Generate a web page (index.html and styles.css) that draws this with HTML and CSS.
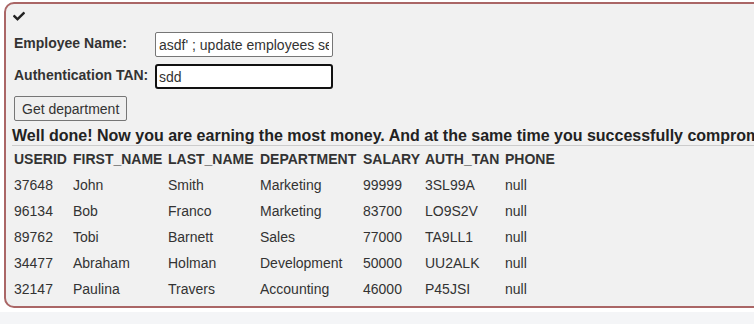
FILE: index.html
```html
<!DOCTYPE html>
<html>
<head>
<meta charset="utf-8">
<link rel="stylesheet" href="styles.css">
</head>
<body>
<div class="attack-container">
  <div class="check-row">
    <svg class="check" viewBox="0 0 512 420" width="12" height="10"><path d="M173.9 404.4l-166.4-166.4c-10-10-10-26.2 0-36.2l36.2-36.2c10-10 26.2-10 36.2 0L192 277.7 432.1 37.6c10-10 26.2-10 36.2 0l36.2 36.2c10 10 10 26.2 0 36.2l-294.4 294.4c-10 10-26.2 10-36.2 0z" fill="#222"/></svg>
  </div>
  <form class="attack-form">
    <label class="lbl">Employee Name:</label>
    <input class="field" type="text" value="asdf' ; update employees set salary=99999 where last_name='Smith">
    <label class="lbl">Authentication TAN:</label>
    <input class="field focused" type="text" value="sdd">
    <div class="btn-row"><button class="btn" type="button">Get department</button></div>
  </form>
  <div class="feedback">Well done! Now you are earning the most money. And at the same time you successfully compromised the integrity of data by changing the salary!</div>
  <table class="results">
    <thead>
      <tr><th class="c1">USERID</th><th class="c2">FIRST_NAME</th><th class="c3">LAST_NAME</th><th class="c4">DEPARTMENT</th><th class="c5">SALARY</th><th class="c6">AUTH_TAN</th><th class="c7">PHONE</th></tr>
    </thead>
    <tbody>
      <tr><td>37648</td><td>John</td><td>Smith</td><td>Marketing</td><td>99999</td><td>3SL99A</td><td>null</td></tr>
      <tr><td>96134</td><td>Bob</td><td>Franco</td><td>Marketing</td><td>83700</td><td>LO9S2V</td><td>null</td></tr>
      <tr><td>89762</td><td>Tobi</td><td>Barnett</td><td>Sales</td><td>77000</td><td>TA9LL1</td><td>null</td></tr>
      <tr><td>34477</td><td>Abraham</td><td>Holman</td><td>Development</td><td>50000</td><td>UU2ALK</td><td>null</td></tr>
      <tr><td>32147</td><td>Paulina</td><td>Travers</td><td>Accounting</td><td>46000</td><td>P45JSI</td><td>null</td></tr>
    </tbody>
  </table>
</div>
<div class="below"></div>
</body>
</html>
```
FILE: styles.css
```css
html, body {
  margin: 0;
  padding: 0;
  overflow: hidden;
  background: #fff;
}
body {
  font-family: "Liberation Sans", Arial, sans-serif;
  font-size: 14px;
  color: #333;
  width: 754px;
  height: 324px;
}
.attack-container {
  margin: 2px 0 0 4px;
  width: 980px;
  height: 306px;
  box-sizing: border-box;
  border: 2px solid #a66;
  border-radius: 10px;
  background: #f1f1f1;
  padding: 0 0 0 6px;
}
.check-row {
  height: 28px;
  display: flex;
  align-items: center;
  padding-left: 1px;
  padding-bottom: 4px;
  box-sizing: border-box;
}
.check { display: block; }
.attack-form {
  display: grid;
  grid-template-columns: 141px 178px;
  grid-auto-rows: 25px;
  row-gap: 7px;
  align-items: center;
  padding-left: 2px;
}
.lbl {
  font-weight: bold;
  color: #333;
  align-self: start;
  padding-top: 3px;
}
.field {
  box-sizing: border-box;
  width: 178px;
  height: 25px;
  border: 1px solid #767676;
  border-radius: 2px;
  background: #fff;
  font-family: "Liberation Sans", Arial, sans-serif;
  font-size: 14px;
  color: #333;
  padding: 1px 3px;
  margin: 0;
}
.field.focused {
  border: 2px solid #111;
  border-radius: 3px;
  padding: 0 2px;
  outline: none;
}
.btn-row { grid-column: 1 / 3; }
.btn {
  font-family: "Liberation Sans", Arial, sans-serif;
  font-size: 14px;
  color: #333;
  height: 25px;
  padding: 0 7px;
  background: #efefef;
  border: 1px solid #767676;
  border-radius: 2px;
  margin: 0;
}
.feedback {
  margin-top: 5px;
  font-weight: bold;
  font-size: 16px;
  color: #222;
  white-space: nowrap;
  height: 19px;
  line-height: 19px;
  border-bottom: 1px solid #ccc;
}
.results {
  border-collapse: collapse;
  margin-left: 0;
}
.results th, .results td {
  text-align: left;
  padding: 0 0 0 2px;
  height: 26px;
  white-space: nowrap;
}
.results th { font-weight: bold; color: #333; }
.results td { color: #333; }
.c1 { width: 57px; }
.c2 { width: 93px; }
.c3 { width: 90px; }
.c4 { width: 101px; }
.c5 { width: 60px; }
.c6 { width: 78px; }
.c7 { width: 60px; }
.below {
  margin-top: 4px;
  height: 20px;
  background: #f4f5f7;
}
```
